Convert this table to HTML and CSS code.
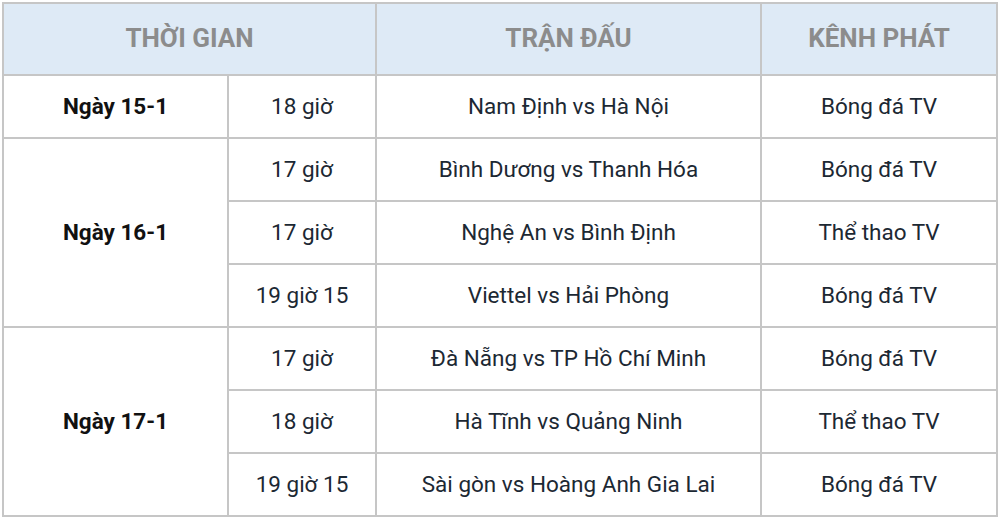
FILE: index.html
```html
<!DOCTYPE html>
<html lang="vi">
<head>
<meta charset="utf-8">
<link rel="stylesheet" href="styles.css">
</head>
<body>
<table class="schedule">
  <colgroup>
    <col class="c-date">
    <col class="c-time">
    <col class="c-match">
    <col class="c-chan">
  </colgroup>
  <thead>
    <tr>
      <th colspan="2">THỜI GIAN</th>
      <th>TRẬN ĐẤU</th>
      <th>KÊNH PHÁT</th>
    </tr>
  </thead>
  <tbody>
    <tr>
      <td class="date">Ngày 15-1</td>
      <td>18 giờ</td>
      <td>Nam Định vs Hà Nội</td>
      <td>Bóng đá TV</td>
    </tr>
    <tr>
      <td class="date" rowspan="3">Ngày 16-1</td>
      <td>17 giờ</td>
      <td>Bình Dương vs Thanh Hóa</td>
      <td>Bóng đá TV</td>
    </tr>
    <tr>
      <td>17 giờ</td>
      <td>Nghệ An vs Bình Định</td>
      <td>Thể thao TV</td>
    </tr>
    <tr>
      <td>19 giờ 15</td>
      <td>Viettel vs Hải Phòng</td>
      <td>Bóng đá TV</td>
    </tr>
    <tr>
      <td class="date" rowspan="3">Ngày 17-1</td>
      <td>17 giờ</td>
      <td>Đà Nẵng vs TP Hồ Chí Minh</td>
      <td>Bóng đá TV</td>
    </tr>
    <tr>
      <td>18 giờ</td>
      <td>Hà Tĩnh vs Quảng Ninh</td>
      <td>Thể thao TV</td>
    </tr>
    <tr>
      <td>19 giờ 15</td>
      <td>Sài gòn vs Hoàng Anh Gia Lai</td>
      <td>Bóng đá TV</td>
    </tr>
  </tbody>
</table>
</body>
</html>
```

FILE: styles.css
```css
html, body {
  margin: 0;
  padding: 0;
  background: #ffffff;
}
body {
  padding: 2px;
  font-family: Roboto, "Noto Sans", sans-serif;
}
.schedule {
  border-collapse: collapse;
  table-layout: fixed;
  width: 996px;
}
.c-date { width: 225px; }
.c-time { width: 148px; }
.c-match { width: 385px; }
.c-chan { width: 236px; }
.schedule th,
.schedule td {
  border: 2px solid #c6c6c6;
  text-align: center;
  vertical-align: middle;
  padding: 0;
  line-height: 1.2;
}
.schedule th {
  background: #deeaf6;
  color: #8c8c8c;
  font-weight: 700;
  font-size: 26px;
  height: 70px;
}
.schedule td {
  height: 61px;
  font-size: 22.5px;
  color: #1c2833;
}
.schedule td.date {
  font-weight: 700;
  color: #111111;
}
```
